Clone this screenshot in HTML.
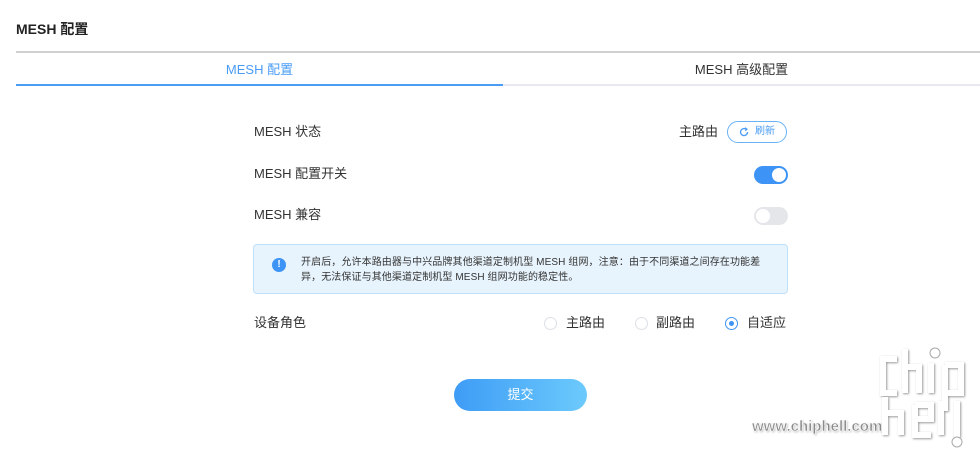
<!DOCTYPE html>
<html><head><meta charset="utf-8">
<style>
*{margin:0;padding:0;box-sizing:border-box}
body{width:980px;height:462px;background:#fff;font-family:"Liberation Sans","Noto Sans CJK SC",sans-serif;color:#333;position:relative;overflow:hidden}
.abs{position:absolute}
.lbl{position:absolute;left:254px;font-size:13px;color:#333;line-height:16px}
.sw{position:absolute;left:754px;width:34px;height:18px;border-radius:9px}
.sw i{position:absolute;top:2px;width:14px;height:14px;border-radius:50%;background:#fff}
.radio{position:absolute;width:13px;height:13px;border-radius:50%;border:1px solid #dcdfe6;background:#fff}
.rt{position:absolute;font-size:13px;line-height:16px;color:#333}
</style></head><body>
<div class="abs" style="left:16px;top:20px;font-size:14px;font-weight:bold;color:#222;line-height:18px">MESH 配置</div>
<div class="abs" style="left:16px;top:51px;width:964px;height:2px;background:#d0d0d0"></div>
<div class="abs" style="left:16px;top:62px;width:487px;text-align:center;font-size:13px;color:#4a9cf5;line-height:16px">MESH 配置</div>
<div class="abs" style="left:503px;top:62px;width:477px;text-align:center;font-size:13px;color:#333;line-height:16px">MESH 高级配置</div>
<div class="abs" style="left:16px;top:84px;width:487px;height:2px;background:#4a9cf5"></div>
<div class="abs" style="left:503px;top:84px;width:477px;height:2px;background:#e8e8ee"></div>

<div class="lbl" style="top:124px">MESH 状态</div>
<div class="abs" style="left:679px;top:124px;font-size:13px;line-height:16px">主路由</div>
<div class="abs" style="left:727px;top:121px;width:60px;height:22px;border:1px solid #6ab2f7;border-radius:11px;font-size:10px;color:#4a9cf5;line-height:20px">
<svg width="10" height="10" viewBox="0 0 10 10" style="position:absolute;left:11px;top:5px"><path d="M8.5 5A3.5 3.5 0 1 1 7 2.2" fill="none" stroke="#4a9cf5" stroke-width="1.3"/><path d="M6 0.8L8 2.2L6.3 3.8" fill="none" stroke="#4a9cf5" stroke-width="1.2"/></svg>
<span style="position:absolute;left:27px;top:0">刷新</span></div>

<div class="lbl" style="top:166px">MESH 配置开关</div>
<div class="sw" style="top:166px;background:#3d94f6"><i style="right:2px"></i></div>
<div class="lbl" style="top:207px">MESH 兼容</div>
<div class="sw" style="top:207px;background:#e4e6ea"><i style="left:2px"></i></div>

<div class="abs" style="left:253px;top:244px;width:535px;height:50px;background:#e8f4fd;border:1px solid #bfe0fb;border-radius:4px"></div>
<div class="abs" style="left:272px;top:258px;width:14px;height:14px;border-radius:50%;background:#3d94f6;color:#fff;font-size:10px;font-weight:bold;text-align:center;line-height:14px">!</div>
<div class="abs" style="left:301px;top:255px;width:468px;font-size:10px;line-height:15px;color:#333;letter-spacing:0.1px">开启后，允许本路由器与中兴品牌其他渠道定制机型 MESH 组网，注意：由于不同渠道之间存在功能差异，无法保证与其他渠道定制机型 MESH 组网功能的稳定性。</div>

<div class="lbl" style="top:315px">设备角色</div>
<div class="radio" style="left:544px;top:317px"></div><div class="rt" style="left:566px;top:315px">主路由</div>
<div class="radio" style="left:635px;top:317px"></div><div class="rt" style="left:656px;top:315px">副路由</div>
<div class="radio" style="left:725px;top:317px;border-color:#3d94f6"><i style="position:absolute;left:3px;top:3px;width:5px;height:5px;border-radius:50%;background:#3d94f6"></i></div><div class="rt" style="left:747px;top:315px">自适应</div>

<div class="abs" style="left:454px;top:379px;width:133px;height:32px;border-radius:16px;background:linear-gradient(90deg,#3e9cf6,#6ccafc);color:#fff;font-size:13px;text-align:center;line-height:32px">提交</div>

<div class="abs" style="left:752px;top:418px;font-size:15px;font-weight:bold;color:#8a8a8a;-webkit-text-stroke:0.5px #fff;text-shadow:0 0 2px #fff,1px 1px 2px #aaa">www.chiphell.com</div>
<svg class="abs" style="left:875px;top:345px" width="100" height="105" viewBox="0 0 100 105">
<g fill="none" stroke="#fff" stroke-width="6" style="filter:drop-shadow(1px 1px 1px #999)">
<path d="M22 14H8V48H22"/><path d="M30 4V48M30 22H44V48"/><path d="M56 18V48"/><path d="M70 20V66M70 20H86V48H72"/>
<path d="M10 52V90M10 68H26V90"/><path d="M40 60H56V74H40M40 60V90H56"/><path d="M66 56V90"/><path d="M82 56V92"/>
</g>
<g fill="#fff" stroke="#aaa" stroke-width="1"><circle cx="60" cy="8" r="5"/><circle cx="82" cy="97" r="5"/></g>
</svg>
</body></html>
